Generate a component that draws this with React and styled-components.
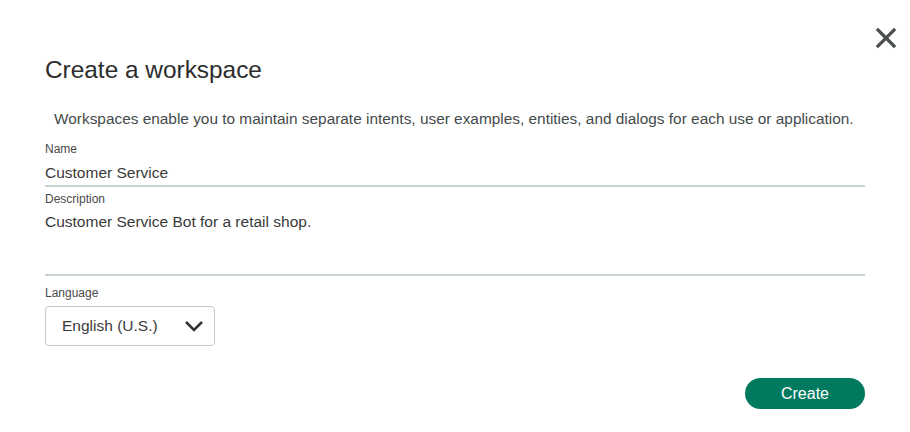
import React from 'react';
import styled, { createGlobalStyle } from 'styled-components';

const Global = createGlobalStyle`
  body {
    margin: 0;
    background: #fff;
    font-family: "Liberation Sans", Arial, sans-serif;
  }
`;

const Modal = styled.div`
  position: relative;
  width: 910px;
  height: 432px;
  box-sizing: border-box;
  padding: 56px 45px 0 45px;
  color: #323232;
`;

const Close = styled.button`
  position: absolute;
  top: 27px;
  right: 13px;
  width: 22px;
  height: 22px;
  padding: 0;
  border: 0;
  background: none;
  cursor: pointer;
`;

const Title = styled.h2`
  margin: 0;
  font-size: 24.4px;
  font-weight: 400;
  line-height: 28px;
  color: #2d2d2d;
`;

const Intro = styled.p`
  margin: 25px 0 0 9px;
  font-size: 15.4px;
  line-height: 20px;
  color: #444b4b;
  white-space: nowrap;
`;

const Field = styled.div`
  margin-top: ${p => p.$top}px;
  display: flex;
  flex-direction: column;
`;

const Label = styled.label`
  font-size: 12px;
  line-height: 14px;
  color: #4a4a4a;
`;

const Value = styled.div`
  width: 820px;
  font-size: 15.5px;
  line-height: 20px;
  color: #3a3a3a;
  padding: ${p => p.$pt}px 0 ${p => p.$pb}px;
  border-bottom: 2px solid #c9d3d3;
`;

const Select = styled.div`
  margin-top: 6px;
  width: 170px;
  height: 40px;
  box-sizing: border-box;
  border: 1px solid #c6c6c6;
  border-radius: 4px;
  display: flex;
  align-items: center;
  justify-content: space-between;
  padding: 0 10px 0 16px;
  font-size: 15.5px;
  color: #3a3a3a;
`;

const Footer = styled.div`
  display: flex;
  justify-content: flex-end;
  width: 820px;
  margin-top: 32px;
`;

const Button = styled.button`
  width: 120px;
  height: 31px;
  border: 0;
  border-radius: 16px;
  background: #007a5e;
  color: #fff;
  font-family: "Liberation Sans", Arial, sans-serif;
  font-size: 16px;
  cursor: pointer;
`;

export default function App() {
  return (
    <>
      <Global />
      <Modal>
        <Close aria-label="Close">
          <svg width="22" height="22" viewBox="0 0 22 22">
            <path d="M3 3 L19 19 M19 3 L3 19" stroke="#4a4f4f" strokeWidth="3.2" strokeLinecap="square" />
          </svg>
        </Close>
        <Title>Create a workspace</Title>
        <Intro>
          Workspaces enable you to maintain separate intents, user examples, entities, and dialogs for each use or application.
        </Intro>
        <Field $top={13}>
          <Label>Name</Label>
          <Value $pt={7} $pb={2}>Customer Service</Value>
        </Field>
        <Field $top={5}>
          <Label>Description</Label>
          <Value $pt={6} $pb={42}>Customer Service Bot for a retail shop.</Value>
        </Field>
        <Field $top={10}>
          <Label>Language</Label>
          <Select>
            English (U.S.)
            <svg width="20" height="12" viewBox="0 0 20 12">
              <path d="M2 2 L10 10 L18 2" fill="none" stroke="#333" strokeWidth="2.5" />
            </svg>
          </Select>
        </Field>
        <Footer>
          <Button>Create</Button>
        </Footer>
      </Modal>
    </>
  );
}
